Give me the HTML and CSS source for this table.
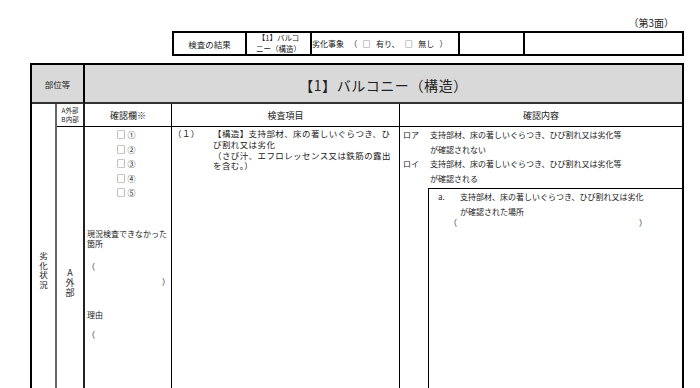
FILE: index.html
```html
<!DOCTYPE html>
<html lang="ja">
<head>
<meta charset="utf-8">
<title>第3面</title>
<link rel="stylesheet" href="styles.css">
</head>
<body>
<div class="page">
  <div class="pageno">（第3面）</div>
  <div class="summary">
    <div class="s-cell s1">検査の結果</div>
    <div class="s-cell s2">【1】バルコ<br>ニー（構造）</div>
    <div class="s-cell s3">劣化事象 （ □ 有り、 □ 無し ）</div>
    <div class="s-cell s4"></div>
    <div class="s-cell s5"></div>
  </div>
  <div class="sheet">
    <div class="hd hd-part">部位等</div>
    <div class="hd hd-title">【1】バルコニー（構造）</div>
    <div class="cell side"><span class="vtext">劣化状況</span></div>
    <div class="cell ab">A外部<br>B内部</div>
    <div class="cell colhead ch3">確認欄※</div>
    <div class="cell colhead ch4">検査項目</div>
    <div class="cell colhead ch5 last">確認内容</div>
    <div class="cell ext"><span class="vtext">A外部</span></div>
    <div class="cell checks">
      <div class="checklist"><span class="cb">□</span> ①<br><span class="cb">□</span> ②<br><span class="cb">□</span> ③<br><span class="cb">□</span> ④<br><span class="cb">□</span> ⑤</div>
      <div class="note">現況検査できなかった<br>箇所</div>
      <div class="pl">（</div>
      <div class="pr">）</div>
      <div class="note reason">理由</div>
      <div class="pl pl2">（</div>
    </div>
    <div class="cell item">
      <span class="num">（１）</span>
      <span class="itemtext">【構造】支持部材、床の著しいぐらつき、ひ<br>び割れ又は劣化<br>（さび汁、エフロレッセンス又は鉄筋の露出<br>を含む。）</span>
    </div>
    <div class="cell content last">
      <div class="opt"><span class="mark">ロア</span><span>支持部材、床の著しいぐらつき、ひび割れ又は劣化等<br>が確認されない</span></div>
      <div class="opt"><span class="mark">ロイ</span><span>支持部材、床の著しいぐらつき、ひび割れ又は劣化等<br>が確認される</span></div>
      <div class="box">
        <div class="opt"><span class="mark2">a.</span><span>支持部材、床の著しいぐらつき、ひび割れ又は劣化<br>が確認された場所</span></div>
        <div class="parens"><span>（</span><span>）</span></div>
      </div>
    </div>
  </div>
</div>
</body>
</html>
```
FILE: styles.css
```css
html, body {
  margin: 0;
  padding: 0;
  background: #fff;
}
body {
  width: 700px;
  height: 388px;
  overflow: hidden;
  font-family: "Noto Sans CJK JP", "Noto Sans", sans-serif;
  color: #222;
}
.page {
  width: 700px;
}
.pageno {
  padding: 17px 26px 0 0;
  height: 12px;
  line-height: 12px;
  font-size: 10px;
  text-align: right;
}
.summary {
  display: flex;
  box-sizing: border-box;
  width: 512px;
  height: 25px;
  margin: 2px 0 0 172px;
  border: 2px solid #000;
}
.s-cell {
  box-sizing: border-box;
  display: flex;
  align-items: center;
  justify-content: center;
  text-align: center;
  white-space: nowrap;
}
.s-cell + .s-cell {
  border-left: 2px solid #000;
}
.s1 {
  width: 71px;
  font-size: 8.5px;
}
.s2 {
  width: 65px;
  font-size: 7.5px;
  line-height: 10.4px;
}
.s3 {
  width: 148px;
  font-size: 8px;
  justify-content: flex-start;
  word-spacing: 3.5px;
}
.s4 {
  width: 65px;
}
.s5 {
  flex: 1;
}
.sheet {
  display: grid;
  grid-template-columns: 25px 28px 87px 228px 282px;
  grid-template-rows: 39px 23px 311px;
  box-sizing: border-box;
  width: 654px;
  margin: 7px 0 0 30px;
  border: 2px solid #000;
}
.hd {
  background: #d9d9d9;
  border-bottom: 2px solid #333;
  box-sizing: border-box;
  display: flex;
  align-items: center;
  justify-content: center;
  grid-row: 1;
}
.hd-part {
  grid-column: 1 / 3;
  border-right: 2px solid #000;
  font-size: 8.5px;
}
.hd-title {
  grid-column: 3 / 6;
  font-size: 14px;
  letter-spacing: 0.6px;
  padding-top: 3px;
}
.cell {
  box-sizing: border-box;
  border-right: 1px solid #000;
}
.cell.last {
  border-right: 0;
}
.side {
  grid-column: 1;
  grid-row: 2 / 4;
  border-right: 2px solid #666;
  display: flex;
  align-items: center;
  justify-content: center;
}
.vtext {
  writing-mode: vertical-rl;
  text-orientation: upright;
  font-size: 8.5px;
  letter-spacing: 1px;
}
.ab {
  grid-column: 2;
  grid-row: 2;
  border-right: 2px solid #222;
  border-bottom: 1px solid #000;
  font-size: 6.5px;
  line-height: 9.4px;
  display: flex;
  align-items: center;
  justify-content: center;
  text-align: center;
}
.colhead {
  grid-row: 2;
  border-bottom: 1px solid #000;
  font-size: 9px;
  display: flex;
  align-items: center;
  justify-content: center;
}
.ch3 { grid-column: 3; }
.ch4 { grid-column: 4; }
.ch5 { grid-column: 5; }
.ext {
  grid-column: 2;
  grid-row: 3;
  border-right: 2px solid #222;
  display: flex;
  align-items: center;
  justify-content: center;
}
.ext .vtext {
  font-size: 9px;
  letter-spacing: 1px;
}
.checks {
  grid-column: 3;
  grid-row: 3;
  padding: 1px 1px 0 2px;
  font-size: 8px;
  white-space: nowrap;
}
.checklist {
  line-height: 14.5px;
  text-align: center;
  padding-right: 5px;
}
.cb {
  font-size: 9px;
}
.note {
  margin-top: 28px;
  line-height: 10.5px;
}
.pl {
  margin-top: 12px;
  line-height: 10.5px;
}
.pr {
  margin-top: 4.5px;
  line-height: 10.5px;
  text-align: right;
}
.reason {
  margin-top: 22.5px;
}
.pl2 {
  margin-top: 9.5px;
}
.item {
  grid-column: 4;
  grid-row: 3;
  display: flex;
  align-items: flex-start;
  padding: 1px 0 0 1px;
  font-size: 8.5px;
  line-height: 10.8px;
  white-space: nowrap;
}
.num {
  width: 40px;
  flex: none;
  letter-spacing: 0.4px;
}
.itemtext {
  letter-spacing: 0.4px;
}
.content {
  grid-column: 5;
  grid-row: 3;
  display: flex;
  flex-direction: column;
  padding-top: 1px;
  font-size: 8px;
  line-height: 14.7px;
  white-space: nowrap;
}
.opt {
  display: flex;
}
.mark {
  width: 30px;
  flex: none;
  padding-left: 3px;
  box-sizing: border-box;
}
.box {
  flex: 1;
  margin: 1px 0 0 28px;
  border-left: 1px solid #000;
  border-top: 1px solid #000;
  line-height: 15px;
}
.box .opt {
  padding-left: 9px;
}
.mark2 {
  width: 22px;
  flex: none;
}
.parens {
  display: flex;
  justify-content: space-between;
  padding: 0 35px 0 20px;
  line-height: 8px;
}
```
